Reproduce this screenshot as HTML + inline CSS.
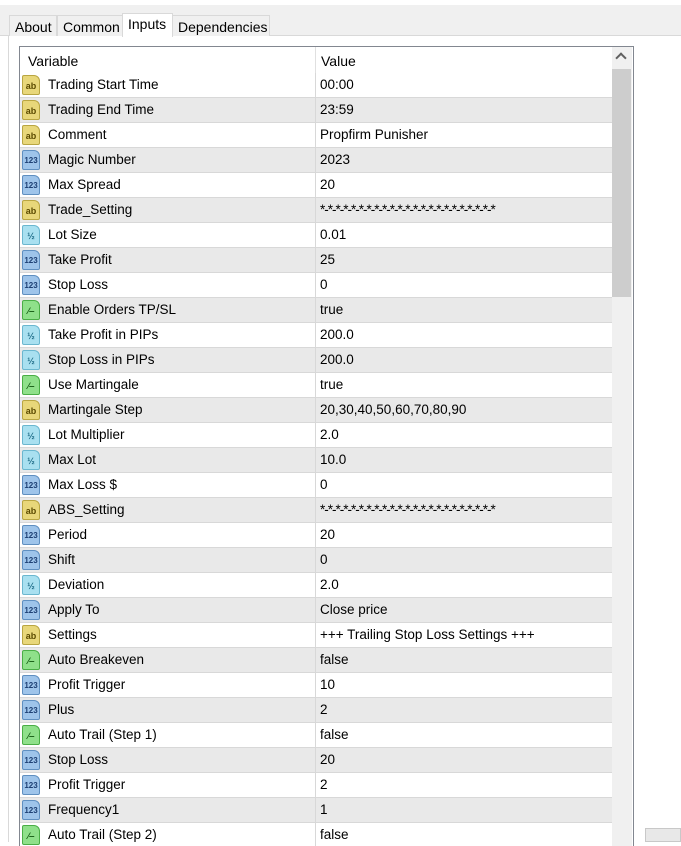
<!DOCTYPE html>
<html><head><meta charset="utf-8"><style>
*{margin:0;padding:0;box-sizing:border-box}
body{width:681px;height:842px;overflow:hidden;background:#fff;font-family:"Liberation Sans",Arial,sans-serif;font-size:13.5px;color:#000;position:relative}
.top{position:absolute;left:0;top:5px;width:681px;height:31px;background:#f0f0f0;border-bottom:1px solid #d9d9d9}
.tab{position:absolute;top:15px;height:21px;background:#f0f0f0;border:1px solid #d9d9d9;border-bottom:none;padding:3px 5px 0;font-size:14px}
.tab.act{top:13px;height:24px;background:#fff;padding-top:2px}
.panel{position:absolute;left:8px;top:36px;width:673px;height:806px;background:#fff;border-left:1px solid #d9d9d9}
.grid{position:absolute;left:19px;top:46px;width:615px;height:800px;border:1px solid #828790;border-bottom:none;overflow:hidden}
.hdr{height:26px;position:relative;background:#fff}
.hdr span{position:absolute;top:6px;font-size:14px}
.row{height:25px;position:relative;border-bottom:1px solid #d8d8d8;width:592px}
.row.g{background:#e9e9e9}
.row .n{position:absolute;left:28px;top:4px}
.row .v{position:absolute;left:300px;top:4px}
.row .v.s{letter-spacing:-1px}
.row:before{content:"";position:absolute;left:295px;top:0;height:25px;border-left:1px solid #d8d8d8}
.hdr:before{content:"";position:absolute;left:295px;top:0;height:26px;border-left:1px solid #e0e0e0}
.ic{position:absolute;left:2px;top:2px;width:18px;height:20px;border-radius:2px 6px 2px 2px;font-size:9px;font-weight:bold;font-style:normal;text-align:center;line-height:20px}
.ab{background:#e8d77a;border:1px solid #b9a642;color:#5a4a00}
.n3{background:#9ec4ea;border:1px solid #5f8fc0;color:#1d3f73;font-size:8px}
.h{background:#a9e0f0;border:1px solid #6bb7cf;color:#1f6d88;font-size:9px}
.b{background:#8fe08a;border:1px solid #4aae46;color:#155a12}
.sb{position:absolute;left:592px;top:0;width:20px;height:800px;background:#f0f0f0}
.th{position:absolute;left:0;top:22px;width:19px;height:228px;background:#cdcdcd}
.arr{position:absolute;left:5px;top:7px;width:8px;height:8px;border-left:2px solid #606060;border-top:2px solid #606060;transform:rotate(45deg)}
.box{position:absolute;left:645px;top:828px;width:36px;height:14px;background:#e8e8e8;border:1px solid #c8c8c8}
</style></head><body>
<div class="top"></div>
<div class="tab" style="left:9px;width:48px">About</div>
<div class="tab" style="left:57px;width:66px">Common</div>
<div class="tab" style="left:172px;width:98px">Dependencies</div>
<div class="panel"></div>
<div class="tab act" style="left:122px;width:51px">Inputs</div>
<div class="grid">
<div class="hdr"><span style="left:8px">Variable</span><span style="left:301px">Value</span></div>
<div class="row"><i class="ic ab">ab</i><span class="n">Trading Start Time</span><span class="v">00:00</span></div>
<div class="row g"><i class="ic ab">ab</i><span class="n">Trading End Time</span><span class="v">23:59</span></div>
<div class="row"><i class="ic ab">ab</i><span class="n">Comment</span><span class="v">Propfirm Punisher</span></div>
<div class="row g"><i class="ic n3">123</i><span class="n">Magic Number</span><span class="v">2023</span></div>
<div class="row"><i class="ic n3">123</i><span class="n">Max Spread</span><span class="v">20</span></div>
<div class="row g"><i class="ic ab">ab</i><span class="n">Trade_Setting</span><span class="v s">*-*-*-*-*-*-*-*-*-*-*-*-*-*-*-*-*-*-*-*-*-*-*</span></div>
<div class="row"><i class="ic h">½</i><span class="n">Lot Size</span><span class="v">0.01</span></div>
<div class="row g"><i class="ic n3">123</i><span class="n">Take Profit</span><span class="v">25</span></div>
<div class="row"><i class="ic n3">123</i><span class="n">Stop Loss</span><span class="v">0</span></div>
<div class="row g"><i class="ic b">⁄‒</i><span class="n">Enable Orders TP/SL</span><span class="v">true</span></div>
<div class="row"><i class="ic h">½</i><span class="n">Take Profit in PIPs</span><span class="v">200.0</span></div>
<div class="row g"><i class="ic h">½</i><span class="n">Stop Loss in PIPs</span><span class="v">200.0</span></div>
<div class="row"><i class="ic b">⁄‒</i><span class="n">Use Martingale</span><span class="v">true</span></div>
<div class="row g"><i class="ic ab">ab</i><span class="n">Martingale Step</span><span class="v">20,30,40,50,60,70,80,90</span></div>
<div class="row"><i class="ic h">½</i><span class="n">Lot Multiplier</span><span class="v">2.0</span></div>
<div class="row g"><i class="ic h">½</i><span class="n">Max Lot</span><span class="v">10.0</span></div>
<div class="row"><i class="ic n3">123</i><span class="n">Max Loss $</span><span class="v">0</span></div>
<div class="row g"><i class="ic ab">ab</i><span class="n">ABS_Setting</span><span class="v s">*-*-*-*-*-*-*-*-*-*-*-*-*-*-*-*-*-*-*-*-*-*-*</span></div>
<div class="row"><i class="ic n3">123</i><span class="n">Period</span><span class="v">20</span></div>
<div class="row g"><i class="ic n3">123</i><span class="n">Shift</span><span class="v">0</span></div>
<div class="row"><i class="ic h">½</i><span class="n">Deviation</span><span class="v">2.0</span></div>
<div class="row g"><i class="ic n3">123</i><span class="n">Apply To</span><span class="v">Close price</span></div>
<div class="row"><i class="ic ab">ab</i><span class="n">Settings</span><span class="v">+++ Trailing Stop Loss Settings +++</span></div>
<div class="row g"><i class="ic b">⁄‒</i><span class="n">Auto Breakeven</span><span class="v">false</span></div>
<div class="row"><i class="ic n3">123</i><span class="n">Profit Trigger</span><span class="v">10</span></div>
<div class="row g"><i class="ic n3">123</i><span class="n">Plus</span><span class="v">2</span></div>
<div class="row"><i class="ic b">⁄‒</i><span class="n">Auto Trail (Step 1)</span><span class="v">false</span></div>
<div class="row g"><i class="ic n3">123</i><span class="n">Stop Loss</span><span class="v">20</span></div>
<div class="row"><i class="ic n3">123</i><span class="n">Profit Trigger</span><span class="v">2</span></div>
<div class="row g"><i class="ic n3">123</i><span class="n">Frequency1</span><span class="v">1</span></div>
<div class="row"><i class="ic b">⁄‒</i><span class="n">Auto Trail (Step 2)</span><span class="v">false</span></div>
<div class="sb"><div class="arr"></div><div class="th"></div></div>
</div>
<div class="box"></div>
</body></html>
